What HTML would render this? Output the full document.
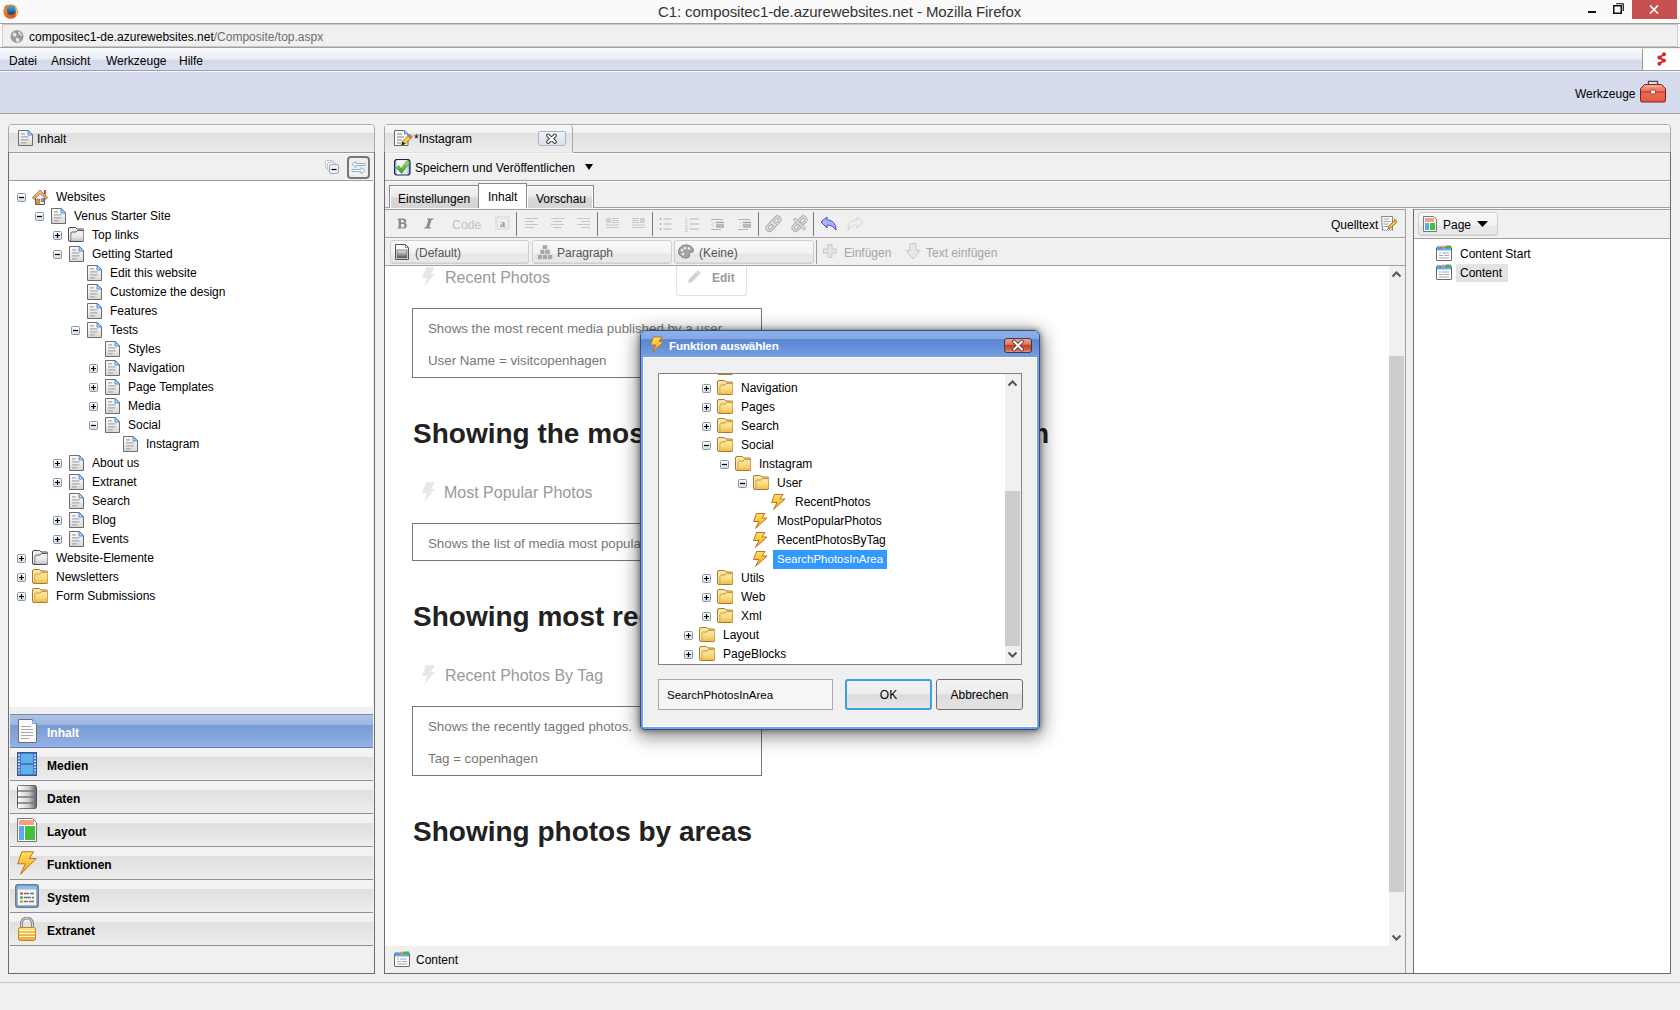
<!DOCTYPE html>
<html><head><meta charset="utf-8">
<style>
*{box-sizing:border-box;margin:0;padding:0}
html,body{width:1680px;height:1010px;overflow:hidden;background:#f0f0f0;font-family:"Liberation Sans",sans-serif;font-size:12px;color:#000}
.a{position:absolute}
.t{position:absolute;white-space:nowrap;line-height:19px;margin-top:1px}
</style></head><body>
<!-- TITLE BAR -->
<div class="a" style="left:0;top:0;width:1680px;height:23px;background:#fafafa"></div>
<div class="t" style="left:658px;top:1px;font-size:15px;line-height:19px;color:#333;letter-spacing:-0.1px">C1: compositec1-de.azurewebsites.net - Mozilla Firefox</div>
<div class="a" style="left:1632px;top:0;width:45px;height:19px;background:#c75050"></div>
<!-- ADDRESS BAR -->
<div class="a" style="left:0;top:23px;width:1680px;height:25px;background:#f0f0f0;border-top:1px solid #a0a0a0;border-bottom:1px solid #a0a0a0;box-shadow:inset 0 1px 0 #c8c8c8,inset 0 -1px 0 #c8c8c8"></div>
<div class="t" style="left:29px;top:27px;font-size:12px;line-height:19px;color:#000">compositec1-de.azurewebsites.net<span style="color:#6d6d6d">/Composite/top.aspx</span></div>
<!-- MENU BAR -->
<div class="a" style="left:0;top:48px;width:1643px;height:23px;background:linear-gradient(#f9fafd 0%,#e9edf7 52%,#d3d9ea 53%,#d8deee 100%);border-bottom:1px solid #a0a0a0"></div>
<div class="a" style="left:1642px;top:49px;width:38px;height:22px;background:#fdfdfd;border-left:1px solid #999;border-bottom:1px solid #a0a0a0"></div>
<div class="t" style="left:9px;top:51px">Datei</div>
<div class="t" style="left:51px;top:51px">Ansicht</div>
<div class="t" style="left:106px;top:51px">Werkzeuge</div>
<div class="t" style="left:179px;top:51px">Hilfe</div>
<!-- BLUE BAND -->
<div class="a" style="left:0;top:71px;width:1680px;height:43px;background:#d6dbee;border-bottom:1px solid #a0a0a0"></div>
<div class="a" style="left:0;top:71px;width:1680px;height:1px;background:#f6f7fb"></div><div class="t" style="left:1575px;top:84px">Werkzeuge</div>
<svg width="0" height="0" style="position:absolute">
<defs>
<linearGradient id="pmg" x1="0" y1="0" x2="0" y2="1"><stop offset="0" stop-color="#fff"/><stop offset="1" stop-color="#d3dbe3"/></linearGradient>
<linearGradient id="yfg" x1="0" y1="0" x2="0" y2="1"><stop offset="0" stop-color="#fdf0bd"/><stop offset="1" stop-color="#eec45a"/></linearGradient>
<linearGradient id="gfg" x1="0" y1="0" x2="0" y2="1"><stop offset="0" stop-color="#fafafa"/><stop offset="1" stop-color="#c9c9c9"/></linearGradient>
<linearGradient id="bolg" x1="0" y1="0" x2="0" y2="1"><stop offset="0" stop-color="#ffe25a"/><stop offset="1" stop-color="#f7a21b"/></linearGradient>
<linearGradient id="pgg" x1="0" y1="0" x2="0" y2="1"><stop offset="0" stop-color="#fafafa"/><stop offset=".45" stop-color="#f0f0f0"/><stop offset="1" stop-color="#d6d6d6"/></linearGradient>
<linearGradient id="yfb" x1="0" y1="0" x2="0" y2="1"><stop offset="0" stop-color="#fde9a8"/><stop offset="1" stop-color="#f2c860"/></linearGradient>
<linearGradient id="yff" x1="0" y1="0" x2="0" y2="1"><stop offset="0" stop-color="#fde79c"/><stop offset=".5" stop-color="#f8d77a"/><stop offset="1" stop-color="#efbd4c"/></linearGradient>
<linearGradient id="gfb" x1="0" y1="0" x2="0" y2="1"><stop offset="0" stop-color="#f4f4f4"/><stop offset="1" stop-color="#d8d8d8"/></linearGradient>
<linearGradient id="gff" x1="0" y1="0" x2="0" y2="1"><stop offset="0" stop-color="#f6f6f6"/><stop offset=".5" stop-color="#e6e6e6"/><stop offset="1" stop-color="#c4c4c4"/></linearGradient>
<linearGradient id="roofg" x1="0" y1="0" x2="0" y2="1"><stop offset="0" stop-color="#f0c898"/><stop offset="1" stop-color="#d89a5a"/></linearGradient>
<symbol id="plus" viewBox="0 0 9 9"><rect x=".5" y=".5" width="8" height="8" rx="1" fill="url(#pmg)" stroke="#8797a8"/><path d="M2 4.5h5M4.5 2v5" stroke="#000" stroke-width="1.2"/></symbol>
<symbol id="minus" viewBox="0 0 9 9"><rect x=".5" y=".5" width="8" height="8" rx="1" fill="url(#pmg)" stroke="#8797a8"/><path d="M2 4.5h5" stroke="#000" stroke-width="1.2"/></symbol>
<symbol id="page" viewBox="0 0 16 16"><path d="M1.5 .5h10l4 4v11h-14z" fill="url(#pgg)" stroke="#6c6c6c"/><path d="M11 .5l4.5 4.5h-4.5z" fill="#bcdcfb" stroke="#4f8fd6"/><path d="M4 3.8h4M4 6.8h7.5M4 9.8h7.5M4 12.8h5" stroke="#a9a9a9" stroke-width="1.3"/></symbol>
<symbol id="yfold" viewBox="0 0 16 16"><path d="M.5 2a1.5 1.5 0 0 1 1.5-1.5h5.5l1.5 1.5h5.5a1.5 1.5 0 0 1 1.5 1.5v9.5a1.5 1.5 0 0 1-1.5 1.5h-12.5a1.5 1.5 0 0 1-1.5-1.5z" fill="url(#yfb)" stroke="#a8782c"/><path d="M3 14.5v-8a1.5 1.5 0 0 1 1.5-1.5h3.5l1.5-1.5h6" fill="url(#yff)" stroke="#c89a48" stroke-width="1"/><path d="M3.5 6.5v7.5h11.5v-8.5h-5.5l-1.5 1.5h-4z" fill="url(#yff)"/><path d="M1.5 3.5v10" stroke="#fff8e0" stroke-dasharray="1 1"/></symbol>
<symbol id="gfold" viewBox="0 0 16 16"><path d="M.5 2a1.5 1.5 0 0 1 1.5-1.5h5.5l1.5 1.5h5.5a1.5 1.5 0 0 1 1.5 1.5v9.5a1.5 1.5 0 0 1-1.5 1.5h-12.5a1.5 1.5 0 0 1-1.5-1.5z" fill="url(#gfb)" stroke="#4a4a4a"/><path d="M3 14.5v-8a1.5 1.5 0 0 1 1.5-1.5h3.5l1.5-1.5h6" fill="none" stroke="#5a5a5a" stroke-width="1"/><path d="M3.5 6.5v7.5h11.5v-8.5h-5.5l-1.5 1.5h-4z" fill="url(#gff)"/><path d="M1.5 3.5v10" stroke="#fff" stroke-dasharray="1 1"/></symbol>
<symbol id="house" viewBox="0 0 16 16"><rect x="12" y="1" width="1.8" height="4.5" fill="#c8302a"/><path d="M3.5 8.5v7h9v-7" fill="#f0f0f0" stroke="#585858"/><path d="M.3 8.6L8 1l7.7 7.6-1.8 1.8L8 4.6 2.1 10.4z" fill="url(#roofg)" stroke="#9a6a3a" stroke-width=".8" stroke-linejoin="round"/><rect x="4.8" y="10.2" width="3" height="5.3" fill="#e8943a" stroke="#8a5a2a" stroke-width=".6"/><rect x="9.4" y="9.8" width="2.6" height="2.8" fill="#8aa6c0" stroke="#4a5a6a" stroke-width=".6"/></symbol>
<symbol id="bolt" viewBox="0 0 16 16"><path d="M3.5 .5H12L9 5H14L2.5 15.5L6 8.5H.5Z" fill="url(#bolg)" stroke="#c0702a" stroke-linejoin="round"/></symbol>
<symbol id="cph" viewBox="0 0 16 16"><rect x=".5" y="2.5" width="15" height="13" rx=".5" fill="#fff" stroke="#6a6a6a"/><path d="M1 3h14v2.5h-14z" fill="#62b0ec"/><path d="M1.5 3.5v-2h3l.5 2z" fill="#62b0ec" stroke="#3a7ab8" stroke-width=".5"/><path d="M5.5 .8h4.2v2.2h-4.2z" fill="#ec8a5a"/><path d="M10 .8h4.8v2.2h-4.8z" fill="#4cba4c" stroke="#2a8a2a" stroke-width=".4"/><path d="M3 8h2M6 8h7M3 10.5h4M8 10.5h5M3 13h10" stroke="#a4a4a4" stroke-width="1.2"/></symbol>
</defs></svg>


<svg class="a" style="left:2px;top:3px" width="17" height="17" viewBox="0 0 17 17"><defs><radialGradient id="ffo" cx=".35" cy=".35" r=".8"><stop offset="0" stop-color="#f29a2a"/><stop offset="1" stop-color="#d8441e"/></radialGradient><linearGradient id="ffb" x1="0" y1="0" x2="0" y2="1"><stop offset="0" stop-color="#3cb6e8"/><stop offset="1" stop-color="#123e88"/></linearGradient></defs><circle cx="8.6" cy="8.6" r="7.2" fill="url(#ffo)"/><circle cx="9.4" cy="7" r="4.6" fill="url(#ffb)"/><path d="M13.2 3.6c1.8 1.6 2.6 4 2.2 6.4-.4 1.6-1.2 2.6-2 3.2.8-1.6 1-3.4.4-5-.2-1.6-.4-3.2-.6-4.6z" fill="#f6d04a"/><path d="M5 10.6c1.4 1.4 4 1.8 6.2.6" stroke="#7a2a10" stroke-width="1" fill="none" opacity=".7"/><path d="M2 5c.6-1.8 2-3 3.4-3.6-.6 1.2-.4 2.4.4 3.2" fill="#e8742a"/></svg>
<svg class="a" style="left:10px;top:29px" width="15" height="15" viewBox="0 0 15 15"><circle cx="7" cy="7.5" r="6.5" fill="#9a9a9a"/><path d="M3 4c1.5-.5 3 0 3.5 1.5S5 8 4 7.5 2.5 5 3 4zM8 2.5c2 .5 3.5 2 4 4-1 .5-2 0-2.5-1S8 4 8 2.5zM6 9c1.5-.5 3 .5 3.5 2S8 13.5 7 13s-1.5-3-1-4z" fill="#e6e6e6"/></svg>
<div class="a" style="left:0;top:24px;width:3px;height:23px;background:#f8f8f8;border-right:1px solid #cfcfcf"></div>
<div class="a" style="left:1677px;top:24px;width:3px;height:23px;background:#f8f8f8;border-left:1px solid #cfcfcf"></div>
<div class="a" style="left:1588px;top:11px;width:8px;height:2px;background:#111"></div>
<svg class="a" style="left:1613px;top:3px" width="11" height="11" viewBox="0 0 11 11"><rect x=".75" y="2.75" width="7.5" height="7.5" fill="none" stroke="#111" stroke-width="1.5"/><path d="M3 .75h7.25v7.25" fill="none" stroke="#111" stroke-width="1.2"/></svg>
<svg class="a" style="left:1649px;top:5px" width="10" height="9" viewBox="0 0 10 9"><path d="M1 .5l8 8M9 .5l-8 8" stroke="#fff" stroke-width="1.6"/></svg>
<svg class="a" style="left:1657px;top:52px" width="10" height="14" viewBox="0 0 10 14"><g fill="#d42a2a"><circle cx="7" cy="2.3" r="2"/><circle cx="2.4" cy="5.6" r="2"/><circle cx="7" cy="8.6" r="2"/><circle cx="2.4" cy="11.7" r="2"/></g><path d="M7 2.3L2.4 5.6 7 8.6 2.4 11.7" stroke="#d42a2a" stroke-width="2" fill="none"/></svg>
<svg class="a" style="left:1640px;top:80px" width="26" height="23" viewBox="0 0 26 23"><path d="M8.5 5v-3.5h9v3.5" fill="none" stroke="#4a4a4a" stroke-width="1.4"/><path d="M9.6 5v-2.4h6.8v2.4" fill="none" stroke="#f4f4f4" stroke-width=".8"/><path d="M4.5 4.5h17l4 4.2v11.8a1.5 1.5 0 0 1-1.5 1.5h-22a1.5 1.5 0 0 1-1.5-1.5v-11.8z" fill="url(#tbg)" stroke="#7a2418"/><path d="M1 12h24" stroke="#a83a26" stroke-width="1"/><path d="M5 6h16" stroke="#fbb8a8" stroke-width="1"/><rect x="10.5" y="10" width="5" height="4" rx="1" fill="#f8eee8" stroke="#6a3a2a" stroke-width=".8"/></svg>
<svg width="0" height="0" style="position:absolute"><defs><linearGradient id="tbg" x1="0" y1="0" x2="0" y2="1"><stop offset="0" stop-color="#f7a08c"/><stop offset=".45" stop-color="#ee6a52"/><stop offset="1" stop-color="#e25a3e"/></linearGradient></defs></svg>

<!-- LEFT PANEL -->
<div class="a" style="left:8px;top:124px;width:367px;height:850px;border:1px solid #a9a9a9;border-radius:4px 4px 0 0;background:#f0f0f0"></div>
<div class="a" style="left:8px;top:152px;width:367px;height:822px;border:1px solid #6d6d6d;border-top:0"></div>
<div class="a" style="left:9px;top:125px;width:365px;height:27px;background:linear-gradient(#fdfdfd 0,#f4f4f4 5%,#f2f2f2 29%,#dfdfdf 30%,#e3e3e3 55%,#ebebeb 100%);border-radius:3px 3px 0 0"></div>
<div class="a" style="left:9px;top:152px;width:365px;height:1px;background:#9d9d9d"></div><div class="a" style="left:9px;top:153px;width:365px;height:1px;background:#fbfbfb"></div>
<svg class="a" style="left:17px;top:130px" width="16" height="16"><use href="#page"/></svg>
<div class="t" style="left:37px;top:129px">Inhalt</div>
<div class="a" style="left:9px;top:180px;width:364px;height:1px;background:#9d9d9d"></div>
<svg class="a" style="left:325px;top:160px" width="14" height="14" viewBox="0 0 14 14"><rect x=".5" y=".5" width="8" height="8" rx="1.5" fill="#f4f7fb" stroke="#b9c7d6"/><rect x="2.5" y="2.5" width="8" height="8" rx="1.5" fill="#f4f7fb" stroke="#b9c7d6"/><rect x="4.5" y="4.5" width="9" height="9" rx="1.5" fill="#eef2f6" stroke="#9aaabb"/><path d="M6.5 9.5h5" stroke="#000" stroke-width="1.2"/></svg>
<div class="a" style="left:347px;top:156px;width:23px;height:23px;border:2px solid #777;border-radius:4px;background:#efefef"></div>
<svg class="a" style="left:350px;top:159px" width="17" height="17" viewBox="0 0 17 17"><path d="M2 5.5l4-3v2h9v2h-9v2z" fill="#fff" stroke="#8fb0cc" stroke-linejoin="round"/><path d="M15 11.5l-4-3v2h-9v2h9v2z" fill="#fff" stroke="#8fb0cc" stroke-linejoin="round"/></svg>
<div class="a" style="left:9px;top:181px;width:364px;height:526px;background:#fff"></div>
<svg class="a" style="left:17px;top:193px" width="9" height="9"><use href="#minus"/></svg>
<svg class="a" style="left:32px;top:189px" width="16" height="16"><use href="#house"/></svg>
<div class="t" style="left:56px;top:187px">Websites</div>
<svg class="a" style="left:35px;top:212px" width="9" height="9"><use href="#minus"/></svg>
<svg class="a" style="left:50px;top:208px" width="16" height="16"><use href="#page"/></svg>
<div class="t" style="left:74px;top:206px">Venus Starter Site</div>
<svg class="a" style="left:53px;top:231px" width="9" height="9"><use href="#plus"/></svg>
<svg class="a" style="left:68px;top:227px" width="16" height="16"><use href="#gfold"/></svg>
<div class="t" style="left:92px;top:225px">Top links</div>
<svg class="a" style="left:53px;top:250px" width="9" height="9"><use href="#minus"/></svg>
<svg class="a" style="left:68px;top:246px" width="16" height="16"><use href="#page"/></svg>
<div class="t" style="left:92px;top:244px">Getting Started</div>
<svg class="a" style="left:86px;top:265px" width="16" height="16"><use href="#page"/></svg>
<div class="t" style="left:110px;top:263px">Edit this website</div>
<svg class="a" style="left:86px;top:284px" width="16" height="16"><use href="#page"/></svg>
<div class="t" style="left:110px;top:282px">Customize the design</div>
<svg class="a" style="left:86px;top:303px" width="16" height="16"><use href="#page"/></svg>
<div class="t" style="left:110px;top:301px">Features</div>
<svg class="a" style="left:71px;top:326px" width="9" height="9"><use href="#minus"/></svg>
<svg class="a" style="left:86px;top:322px" width="16" height="16"><use href="#page"/></svg>
<div class="t" style="left:110px;top:320px">Tests</div>
<svg class="a" style="left:104px;top:341px" width="16" height="16"><use href="#page"/></svg>
<div class="t" style="left:128px;top:339px">Styles</div>
<svg class="a" style="left:89px;top:364px" width="9" height="9"><use href="#plus"/></svg>
<svg class="a" style="left:104px;top:360px" width="16" height="16"><use href="#page"/></svg>
<div class="t" style="left:128px;top:358px">Navigation</div>
<svg class="a" style="left:89px;top:383px" width="9" height="9"><use href="#plus"/></svg>
<svg class="a" style="left:104px;top:379px" width="16" height="16"><use href="#page"/></svg>
<div class="t" style="left:128px;top:377px">Page Templates</div>
<svg class="a" style="left:89px;top:402px" width="9" height="9"><use href="#plus"/></svg>
<svg class="a" style="left:104px;top:398px" width="16" height="16"><use href="#page"/></svg>
<div class="t" style="left:128px;top:396px">Media</div>
<svg class="a" style="left:89px;top:421px" width="9" height="9"><use href="#minus"/></svg>
<svg class="a" style="left:104px;top:417px" width="16" height="16"><use href="#page"/></svg>
<div class="t" style="left:128px;top:415px">Social</div>
<svg class="a" style="left:122px;top:436px" width="16" height="16"><use href="#page"/></svg>
<div class="t" style="left:146px;top:434px">Instagram</div>
<svg class="a" style="left:53px;top:459px" width="9" height="9"><use href="#plus"/></svg>
<svg class="a" style="left:68px;top:455px" width="16" height="16"><use href="#page"/></svg>
<div class="t" style="left:92px;top:453px">About us</div>
<svg class="a" style="left:53px;top:478px" width="9" height="9"><use href="#plus"/></svg>
<svg class="a" style="left:68px;top:474px" width="16" height="16"><use href="#page"/></svg>
<div class="t" style="left:92px;top:472px">Extranet</div>
<svg class="a" style="left:68px;top:493px" width="16" height="16"><use href="#page"/></svg>
<div class="t" style="left:92px;top:491px">Search</div>
<svg class="a" style="left:53px;top:516px" width="9" height="9"><use href="#plus"/></svg>
<svg class="a" style="left:68px;top:512px" width="16" height="16"><use href="#page"/></svg>
<div class="t" style="left:92px;top:510px">Blog</div>
<svg class="a" style="left:53px;top:535px" width="9" height="9"><use href="#plus"/></svg>
<svg class="a" style="left:68px;top:531px" width="16" height="16"><use href="#page"/></svg>
<div class="t" style="left:92px;top:529px">Events</div>
<svg class="a" style="left:17px;top:554px" width="9" height="9"><use href="#plus"/></svg>
<svg class="a" style="left:32px;top:550px" width="16" height="16"><use href="#gfold"/></svg>
<div class="t" style="left:56px;top:548px">Website-Elemente</div>
<svg class="a" style="left:17px;top:573px" width="9" height="9"><use href="#plus"/></svg>
<svg class="a" style="left:32px;top:569px" width="16" height="16"><use href="#yfold"/></svg>
<div class="t" style="left:56px;top:567px">Newsletters</div>
<svg class="a" style="left:17px;top:592px" width="9" height="9"><use href="#plus"/></svg>
<svg class="a" style="left:32px;top:588px" width="16" height="16"><use href="#yfold"/></svg>
<div class="t" style="left:56px;top:586px">Form Submissions</div>

<svg width="0" height="0" style="position:absolute"><defs><linearGradient id="dg" x1="0" x2="1"><stop offset="0" stop-color="#fff"/><stop offset=".6" stop-color="#ccc"/><stop offset="1" stop-color="#666"/></linearGradient><linearGradient id="lockg" x1="0" y1="0" x2="0" y2="1"><stop offset="0" stop-color="#ffe48a"/><stop offset="1" stop-color="#f0b43a"/></linearGradient></defs></svg>
<div class="a" style="left:9px;top:707px;width:364px;height:266px;background:#f0f0f0"></div>
<div class="a" style="left:10px;top:714px;width:363px;height:34px;border-top:1px solid #7a8ba8;border-bottom:1px solid #5b7fc0;background:linear-gradient(#adc2e7 0,#9cb5e1 31%,#789cd4 32%,#83a4da 60%,#95b2e4 100%)"></div>
<svg class="a" style="left:17px;top:719px" width="20" height="24" viewBox="0 0 20 24"><path d="M1.5 .5h14l4 4v19h-18z" fill="#fafafa" stroke="#6f6f6f"/><path d="M15.5 .5l4 4h-4z" fill="#d6e6fa" stroke="#6f9fdc"/><path d="M4 7.5h10M4 10.5h12M4 13.5h12M4 16.5h12M4 19.5h8" stroke="#a8a8a8" stroke-width="1.2"/></svg>
<div class="t" style="left:47px;top:723px;font-size:12px;font-weight:bold;color:#fff">Inhalt</div>
<div class="a" style="left:10px;top:748px;width:363px;height:33px;border-bottom:1px solid #8f8f8f;background:linear-gradient(#f4f4f4 0,#f1f1f1 28%,#e0e0e0 29%,#e5e5e5 60%,#eeeeee 100%)"></div>
<svg class="a" style="left:17px;top:752px" width="20" height="24" viewBox="0 0 20 24"><rect x=".5" y=".5" width="19" height="23" fill="#4a78c4" stroke="#2f5a9e"/><rect x="4" y="2" width="12" height="9" rx="1" fill="#5fb1ec"/><rect x="4" y="13" width="12" height="9" rx="1" fill="#5fb1ec"/><path d="M2 2.5v19M18 2.5v19" stroke="#fff" stroke-width="1.4" stroke-dasharray="1.5 1.5"/></svg>
<div class="t" style="left:47px;top:756px;font-size:12px;font-weight:bold;color:#000">Medien</div>
<div class="a" style="left:10px;top:781px;width:363px;height:33px;border-bottom:1px solid #8f8f8f;background:linear-gradient(#f4f4f4 0,#f1f1f1 28%,#e0e0e0 29%,#e5e5e5 60%,#eeeeee 100%)"></div>
<svg class="a" style="left:17px;top:785px" width="20" height="24" viewBox="0 0 20 24"><rect x=".5" y=".5" width="19" height="23" rx="2" fill="#777" stroke="#555"/><path d="M1 3h18M1 9h18M1 15h18M1 21h18" stroke="url(#dg)" stroke-width="4.5"/></svg>
<div class="t" style="left:47px;top:789px;font-size:12px;font-weight:bold;color:#000">Daten</div>
<div class="a" style="left:10px;top:814px;width:363px;height:33px;border-bottom:1px solid #8f8f8f;background:linear-gradient(#f4f4f4 0,#f1f1f1 28%,#e0e0e0 29%,#e5e5e5 60%,#eeeeee 100%)"></div>
<svg class="a" style="left:17px;top:818px" width="20" height="24" viewBox="0 0 20 24"><path d="M.5 .5h15l4 4v19h-19z" fill="#fff" stroke="#777"/><rect x="2" y="2" width="15" height="5" fill="#f4a08a"/><rect x="2" y="8" width="5" height="14" fill="#5aaaf0"/><rect x="8" y="8" width="10" height="14" fill="#42c23a"/></svg>
<div class="t" style="left:47px;top:822px;font-size:12px;font-weight:bold;color:#000">Layout</div>
<div class="a" style="left:10px;top:847px;width:363px;height:33px;border-bottom:1px solid #8f8f8f;background:linear-gradient(#f4f4f4 0,#f1f1f1 28%,#e0e0e0 29%,#e5e5e5 60%,#eeeeee 100%)"></div>
<svg class="a" style="left:17px;top:851px" width="20" height="24" viewBox="0 0 20 24"><path d="M4.8 .75H16.5L12.4 7.5H19.3L3.5 23.25L8.3 12.75H.7Z" fill="url(#bolg)" stroke="#c0702a" stroke-linejoin="round"/></svg>
<div class="t" style="left:47px;top:855px;font-size:12px;font-weight:bold;color:#000">Funktionen</div>
<div class="a" style="left:10px;top:880px;width:363px;height:33px;border-bottom:1px solid #8f8f8f;background:linear-gradient(#f4f4f4 0,#f1f1f1 28%,#e0e0e0 29%,#e5e5e5 60%,#eeeeee 100%)"></div>
<svg class="a" style="left:15px;top:884px" width="24" height="24" viewBox="0 0 24 24"><rect x=".75" y=".75" width="22.5" height="22.5" rx="2.5" fill="#9db3c8" stroke="#647d96" stroke-width="1.5"/><rect x="2.5" y="2" width="19" height="3" fill="#84c0f0"/><rect x="3" y="5.5" width="18" height="15.5" fill="#f6f6f6"/><circle cx="6.5" cy="9.5" r="1.6" fill="#e0604a"/><circle cx="6.5" cy="13.5" r="1.6" fill="#44b24a"/><circle cx="6.5" cy="17.5" r="1.6" fill="#e09a3a"/><path d="M9 9.5h5M15 9.5h4M9 13.5h7M17 13.5h2M9 17.5h4M14 17.5h5" stroke="#707070" stroke-width="1.4"/></svg>
<div class="t" style="left:47px;top:888px;font-size:12px;font-weight:bold;color:#000">System</div>
<div class="a" style="left:10px;top:913px;width:363px;height:33px;border-bottom:1px solid #8f8f8f;background:linear-gradient(#f4f4f4 0,#f1f1f1 28%,#e0e0e0 29%,#e5e5e5 60%,#eeeeee 100%)"></div>
<svg class="a" style="left:17px;top:917px" width="20" height="24" viewBox="0 0 20 24"><path d="M4.5 11v-4.5a5.5 5.5 0 0 1 11 0v4.5" fill="none" stroke="#8a8a8a" stroke-width="3"/><path d="M4.5 11v-4.5a5.5 5.5 0 0 1 11 0v4.5" fill="none" stroke="#d8d8d8" stroke-width="1"/><rect x="1.5" y="10.5" width="17" height="13" rx="2" fill="url(#lockg)" stroke="#c0861a"/><path d="M2 13.5h16M2 16.5h16M2 19.5h16" stroke="#fff6c8" stroke-width="1.2"/><path d="M2 15h16M2 18h16M2 21h16" stroke="#e0a030" stroke-width=".8"/></svg>
<div class="t" style="left:47px;top:921px;font-size:12px;font-weight:bold;color:#000">Extranet</div>
<svg width="0" height="0" style="position:absolute"><defs><linearGradient id="chkg" x1="0" y1="0" x2="0" y2="1"><stop offset="0" stop-color="#fff"/><stop offset="1" stop-color="#cfd8e6"/></linearGradient><linearGradient id="grg" x1="0" y1="0" x2="0" y2="1"><stop offset="0" stop-color="#eee"/><stop offset="1" stop-color="#555"/></linearGradient><symbol id="gbolt" viewBox="0 0 15 20"><path d="M5 0h9l-4 7h4l-11 13 3-9h-5z" fill="#e8e8e8"/></symbol></defs></svg>
<div class="a" style="left:0;top:982px;width:1680px;height:1px;background:#c4c4c4"></div>
<!-- EDITOR PANEL -->
<div class="a" style="left:384px;top:124px;width:1287px;height:850px;border:1px solid #a9a9a9;border-radius:4px 4px 0 0;background:#f0f0f0"></div>
<div class="a" style="left:384px;top:152px;width:1287px;height:822px;border:1px solid #6d6d6d;border-top:0"></div>
<div class="a" style="left:385px;top:125px;width:1285px;height:27px;background:linear-gradient(#fdfdfd 0,#f4f4f4 5%,#f2f2f2 29%,#dfdfdf 30%,#e3e3e3 55%,#ebebeb 100%);border-radius:3px 3px 0 0"></div>
<div class="a" style="left:385px;top:125px;width:188px;height:28px;border-right:1px solid #a9a9a9;border-radius:0 4px 0 0;background:linear-gradient(#fdfdfd 0,#f5f5f5 5%,#f3f3f3 29%,#e2e2e2 30%,#e6e6e6 55%,#eeeeee 100%)"></div>
<div class="a" style="left:573px;top:152px;width:1097px;height:1px;background:#9d9d9d"></div><div class="a" style="left:385px;top:153px;width:1285px;height:1px;background:#fbfbfb"></div>
<div class="a" style="left:385px;top:152px;width:188px;height:1px;background:#e0e0e0"></div>
<svg class="a" style="left:394px;top:130px" width="19" height="17" viewBox="0 0 19 17"><path d="M.5 .5h10l3.5 3.5v11.5h-13.5z" fill="#fafafa" stroke="#6a6a6a"/><path d="M10.5 .5l3.5 3.5h-3.5z" fill="#bcdcfb" stroke="#4f8fd6"/><path d="M3 4h5M3 7h7M3 10h5M3 13h4" stroke="#a8a8a8" stroke-width="1.3"/><path d="M7.5 15L8.5 11.2 14 5.7 16.8 8.5 11.3 14z" fill="#f5c842" stroke="#7a5a1a" stroke-width=".6"/><path d="M14 5.7L15.6 4.1 18.4 6.9 16.8 8.5z" fill="#e07a7a" stroke="#8a3a3a" stroke-width=".5"/><path d="M7.5 15L8.5 11.2 11.3 14z" fill="#1a1a1a"/></svg>
<div class="t" style="left:414px;top:129px">*Instagram</div>
<div class="a" style="left:538px;top:131px;width:28px;height:15px;border:1px solid #a9b6c8;border-radius:2px;background:linear-gradient(#eef1f5,#dde3ea)"></div>
<svg class="a" style="left:545px;top:132px" width="13" height="13" viewBox="0 0 13 13"><path d="M3 3.5l7 6.5M10 3.5l-7 6.5" stroke="#3a3a3a" stroke-width="3.8" stroke-linecap="round"/><path d="M3 3.5l7 6.5M10 3.5l-7 6.5" stroke="#fff" stroke-width="1.8" stroke-linecap="round"/></svg>
<!-- save row -->
<div class="a" style="left:385px;top:180px;width:1285px;height:1px;background:#a0a0a0"></div>
<div class="a" style="left:385px;top:181px;width:1285px;height:1px;background:#fafafa"></div>
<svg class="a" style="left:394px;top:159px" width="17" height="17" viewBox="0 0 17 17"><defs><linearGradient id="ckg2" x1="0" y1="0" x2="0" y2="1"><stop offset="0" stop-color="#a6e06a"/><stop offset="1" stop-color="#3a9a22"/></linearGradient><linearGradient id="svb" x1="0" y1="0" x2="1" y2="0"><stop offset="0" stop-color="#6a8ad0"/><stop offset=".2" stop-color="#fff"/><stop offset=".8" stop-color="#e4e4e4"/><stop offset="1" stop-color="#6a8ad0"/></linearGradient></defs><rect x=".5" y=".5" width="15.5" height="15.5" rx="2.5" fill="url(#svb)" stroke="#14245c" stroke-width="1.2"/><path d="M1.8 8.8L4.8 6.4 7.2 9.6 13.2 1.6 15.8 3.8 7.6 14.6z" fill="url(#ckg2)" stroke="#3c8a20" stroke-width=".5"/></svg>
<div class="t" style="left:415px;top:158px;font-size:12px">Speichern und Veröffentlichen</div>
<svg class="a" style="left:585px;top:164px" width="8" height="6" viewBox="0 0 8 6"><path d="M0 0h8l-4 6z" fill="#000"/></svg>
<!-- tabs row -->
<div class="a" style="left:385px;top:207px;width:1285px;height:1px;background:#a0a0a0"></div>
<div class="a" style="left:385px;top:208px;width:1285px;height:1px;background:#f8f8f8"></div>
<div class="a" style="left:385px;top:209px;width:1285px;height:1px;background:#a0a0a0"></div>
<div class="a" style="left:389px;top:185px;width:90px;height:23px;border:1px solid #8a8a8a;border-bottom:0;background:linear-gradient(#f4f4f4 0,#ececec 45%,#d9d9d9 55%,#d4d4d4 100%);box-shadow:inset 1px 1px 0 #fff"></div>
<div class="t" style="left:398px;top:189px">Einstellungen</div>
<div class="a" style="left:478px;top:183px;width:49px;height:25px;border:1px solid #8a8a8a;border-bottom:0;background:#fff"></div>
<div class="t" style="left:488px;top:187px">Inhalt</div>
<div class="a" style="left:526px;top:185px;width:68px;height:23px;border:1px solid #8a8a8a;border-bottom:0;background:linear-gradient(#f4f4f4 0,#ececec 45%,#d9d9d9 55%,#d4d4d4 100%);box-shadow:inset 1px 1px 0 #fff,inset -1px 0 0 #fff"></div>
<div class="t" style="left:536px;top:189px">Vorschau</div>
<!-- toolbar row -->

<div class="a" style="left:385px;top:237px;width:1021px;height:1px;background:#a0a0a0"></div>
<div class="a" style="left:385px;top:238px;width:1021px;height:1px;background:#fafafa"></div>
<div class="a" style="left:516px;top:212px;width:1px;height:24px;background:#777"></div>
<div class="a" style="left:597px;top:212px;width:1px;height:24px;background:#777"></div>
<div class="a" style="left:652px;top:212px;width:1px;height:24px;background:#777"></div>
<div class="a" style="left:758px;top:212px;width:1px;height:24px;background:#777"></div>
<div class="a" style="left:813px;top:212px;width:1px;height:24px;background:#777"></div>
<svg class="a" style="left:397px;top:218px" width="11" height="11" viewBox="0 0 11 11"><path d="M.5 .5h5.5c2.2 0 3.3 1 3.3 2.5 0 1.1-.7 1.8-1.8 2.1 1.5.3 2.3 1.1 2.3 2.4 0 1.7-1.3 3-3.6 3h-5.7v-1.2h1.1v-7.6h-1.1z" fill="#8a8a8a"/><path d="M4 2v2.6h1.5c.9 0 1.4-.5 1.4-1.3s-.5-1.3-1.4-1.3zM4 6v3.4h1.8c1 0 1.6-.6 1.6-1.7s-.6-1.7-1.6-1.7z" fill="#f0f0f0"/></svg>
<svg class="a" style="left:424px;top:218px" width="10" height="11" viewBox="0 0 10 11"><path d="M3.2 .5h6.3l-.3 1.2h-1.6l-2.4 7.6h1.6l-.3 1.2h-6.2l.3-1.2h1.5l2.4-7.6h-1.5z" fill="#8a8a8a"/></svg>
<div class="t" style="left:452px;top:215px;font-size:12.3px;color:#c2c2c2">Code</div>
<svg class="a" style="left:495px;top:216px" width="15" height="14" viewBox="0 0 15 14"><defs><pattern id="hatch" width="2.5" height="2.5" patternUnits="userSpaceOnUse" patternTransform="rotate(45)"><rect width="1.1" height="2.5" fill="#d2d2d2"/></pattern></defs><rect x="0" y="0" width="15" height="14" fill="url(#hatch)"/><rect x="3" y="2.5" width="9" height="9" fill="#f0f0f0"/><text x="7.5" y="10.5" text-anchor="middle" font-family="Liberation Serif" font-weight="bold" font-size="11" fill="#9a9a9a">a</text></svg>
<svg class="a" style="left:524px;top:217px" width="80" height="13" viewBox="0 0 80 13"><g stroke="#c6c6c6" stroke-width="1.2"><path d="M1 1.5h13M1 4.5h9M1 7.5h13M1 10.5h9"/><path d="M27 1.5h13M29 4.5h9M27 7.5h13M29 10.5h9"/><path d="M53 1.5h13M57 4.5h9M53 7.5h13M57 10.5h9"/></g></svg>
<svg class="a" style="left:605px;top:217px" width="42" height="13" viewBox="0 0 42 13"><g fill="#cfcfcf"><rect x="1" y="1" width="5" height="5"/><rect x="35" y="1" width="5" height="5"/></g><g stroke="#c6c6c6" stroke-width="1.2"><path d="M7 1.5h7M7 3.5h7M7 5.5h7M1 8h13M1 10.5h13"/><path d="M27 1.5h7M27 3.5h7M27 5.5h7M27 8h13M27 10.5h13"/></g></svg>
<svg class="a" style="left:658px;top:216px" width="95" height="16" viewBox="0 0 95 16"><g fill="#b4b4b4"><circle cx="2.5" cy="3" r="1.1"/><circle cx="2.5" cy="8" r="1.1"/><circle cx="2.5" cy="13" r="1.1"/></g><g stroke="#b4b4b4" stroke-width="1.1"><path d="M5.5 3h8M5.5 8h8M5.5 13h8"/><path d="M32 3h9M32 8h9M32 13h9"/><path d="M53 3.5h12M53 13.5h10M80 3.5h12M80 13.5h10"/></g><g stroke="#a6a6a6" stroke-width="1.3"><path d="M58 6.5h8M58 9h8M58 11h8"/><path d="M85 6.5h8M85 9h8M85 11h8"/></g><path d="M56.5 6l-2.5 2.5 2.5 2.5M82 6l2.5 2.5-2.5 2.5" fill="none" stroke="#d0d0d0" stroke-width="1"/><text x="26.5" y="5.5" font-size="6" fill="#bdbdbd" font-family="Liberation Sans">1</text><text x="26.5" y="10.5" font-size="6" fill="#bdbdbd" font-family="Liberation Sans">2</text><text x="26.5" y="15.5" font-size="6" fill="#bdbdbd" font-family="Liberation Sans">3</text></svg>
<svg class="a" style="left:765px;top:215px" width="44" height="18" viewBox="0 0 44 18"><g fill="none" stroke="#a4a4a4" stroke-width="3"><rect x="1.5" y="9" width="9" height="5" rx="2.5" transform="rotate(-45 6 11.5)"/><rect x="6.5" y="3.5" width="9" height="5" rx="2.5" transform="rotate(-45 11 6)"/><rect x="27.5" y="9" width="9" height="5" rx="2.5" transform="rotate(-45 32 11.5)"/><rect x="32.5" y="3.5" width="9" height="5" rx="2.5" transform="rotate(-45 37 6)"/></g><g fill="none" stroke="#e8e8e8" stroke-width="1.2"><rect x="1.5" y="9" width="9" height="5" rx="2.5" transform="rotate(-45 6 11.5)"/><rect x="6.5" y="3.5" width="9" height="5" rx="2.5" transform="rotate(-45 11 6)"/><rect x="27.5" y="9" width="9" height="5" rx="2.5" transform="rotate(-45 32 11.5)"/><rect x="32.5" y="3.5" width="9" height="5" rx="2.5" transform="rotate(-45 37 6)"/></g><path d="M30 4.5l9 9" stroke="#b8b8b8" stroke-width="3.4" stroke-linecap="round"/><path d="M30 4.5l9 9" stroke="#dedede" stroke-width="1.4" stroke-linecap="round"/></svg>
<svg class="a" style="left:820px;top:216px" width="44" height="16" viewBox="0 0 44 16"><path d="M1 6l6-5v3c5 0 9 3 9 10c-2-3-5-5-9-5v3z" fill="#a9b2f6" stroke="#444cc0" stroke-width="1" stroke-linejoin="round"/><path d="M43 6l-6-5v3c-5 0-9 3-9 10c2-3 5-5 9-5v3z" fill="#f0f0f0" stroke="#d4d4d4" stroke-width="1" stroke-linejoin="round"/></svg>
<div class="t" style="left:1331px;top:215px">Quelltext</div>
<svg class="a" style="left:1381px;top:216px" width="17" height="16" viewBox="0 0 17 16"><path d="M.5 .5h11v14l-1-1-1 1-1-1-1 1-1-1-1 1-1-1-1 1-1-1-1 1z" fill="#f8f8f8" stroke="#888"/><path d="M2.5 3h6M2.5 5.5h7M2.5 8h5M2.5 10.5h6" stroke="#aaa"/><path d="M7 13l1-3 6-6 2 2-6 6z" fill="#f7c340" stroke="#9a5a1a" stroke-width=".8"/><path d="M13 3l2 2" stroke="#e07070" stroke-width="1.6"/></svg>
<!-- format row -->
<div class="a" style="left:385px;top:265px;width:1021px;height:1px;background:#a0a0a0"></div>
<div class="a" style="left:390px;top:240px;width:139px;height:24px;border:1px solid #cfcfcf;border-radius:3px;background:linear-gradient(#f9f9f9 0,#f2f2f2 55%,#e6e6e6 60%,#eaeaea 100%);box-shadow:inset 0 -1px 0 #d9d9d9"></div>
<svg class="a" style="left:395px;top:244px" width="15" height="16" viewBox="0 0 15 16"><path d="M.5 .5h10l3 3v12h-13z" fill="#fff" stroke="#555"/><path d="M10.5 .5v3h3" fill="none" stroke="#888"/><rect x="2" y="6" width="10" height="8" fill="url(#grg)" stroke="#666" stroke-width=".8"/></svg>
<div class="t" style="left:415px;top:243px;color:#555">(Default)</div>
<div class="a" style="left:532px;top:240px;width:140px;height:24px;border:1px solid #cfcfcf;border-radius:3px;background:linear-gradient(#f9f9f9 0,#f2f2f2 55%,#e6e6e6 60%,#eaeaea 100%);box-shadow:inset 0 -1px 0 #d9d9d9"></div>
<svg class="a" style="left:537px;top:244px" width="16" height="16" viewBox="0 0 16 16"><g fill="#a8a8a8" stroke="#e4e4e4" stroke-width=".7"><rect x="5.5" y="1" width="5" height="4.5"/><rect x="3" y="5.5" width="5" height="5"/><rect x="8" y="5.5" width="5" height="5"/><rect x="0.5" y="10.5" width="5" height="5"/><rect x="5.5" y="10.5" width="5" height="5"/><rect x="10.5" y="10.5" width="5" height="5"/></g></svg>
<div class="t" style="left:557px;top:243px;color:#555">Paragraph</div>
<div class="a" style="left:674px;top:240px;width:140px;height:24px;border:1px solid #cfcfcf;border-radius:3px;background:linear-gradient(#f9f9f9 0,#f2f2f2 55%,#e6e6e6 60%,#eaeaea 100%);box-shadow:inset 0 -1px 0 #d9d9d9"></div>
<svg class="a" style="left:678px;top:244px" width="16" height="15" viewBox="0 0 16 15"><path d="M8 1c4 0 7.5 2.5 7.5 5.5 0 2-2 2-3 2s-1.5 1-1 2c.5 1.5-.5 3.5-3.5 3.5C4 14 .5 11 .5 7.5S4 1 8 1z" fill="#a4a4a4" stroke="#7c7c7c"/><g fill="#eee"><circle cx="4" cy="6" r="1.3"/><circle cx="7" cy="4" r="1.3"/><circle cx="11" cy="4.5" r="1.3"/><circle cx="5" cy="10" r="1.3"/></g></svg>
<div class="t" style="left:699px;top:243px;color:#555">(Keine)</div>
<div class="a" style="left:816px;top:240px;width:1px;height:24px;background:#999"></div>
<svg class="a" style="left:823px;top:244px" width="14" height="14" viewBox="0 0 14 14"><path d="M5 .5h4v4.5h4.5v4h-4.5v4.5h-4v-4.5h-4.5v-4h4.5z" fill="#e4e4e4" stroke="#c8c8c8"/></svg>
<div class="t" style="left:844px;top:243px;color:#a5a5a5">Einfügen</div>
<svg class="a" style="left:905px;top:243px" width="16" height="17" viewBox="0 0 16 17"><path d="M5 .5h6v7h4l-7 8.5-7-8.5h4z" fill="#e8e8e8" stroke="#c8c8c8" stroke-linejoin="round"/></svg>
<div class="t" style="left:926px;top:243px;color:#a5a5a5">Text einfügen</div>
<!-- content area -->
<div class="a" style="left:385px;top:266px;width:1004px;height:680px;background:#fff"></div>
<div class="a" style="left:1389px;top:266px;width:16px;height:680px;background:#f0f0f0"></div>
<div class="a" style="left:1389px;top:356px;width:15px;height:536px;background:#cdcdcd"></div>
<svg class="a" style="left:1391px;top:270px" width="11" height="8" viewBox="0 0 11 8"><path d="M1.5 6.5l4-4 4 4" fill="none" stroke="#555" stroke-width="2"/></svg>
<svg class="a" style="left:1391px;top:934px" width="11" height="8" viewBox="0 0 11 8"><path d="M1.5 1.5l4 4 4-4" fill="none" stroke="#555" stroke-width="2"/></svg>
<div class="a" style="left:1405px;top:209px;width:1px;height:764px;background:#a0a0a0"></div>
<div class="a" style="left:1406px;top:209px;width:7px;height:764px;background:#f0f0f0"></div>
<div class="a" style="left:1413px;top:209px;width:1px;height:764px;background:#6d6d6d"></div>
<!-- content bottom bar -->
<svg class="a" style="left:394px;top:951px" width="16" height="16"><use href="#cph"/></svg>
<div class="t" style="left:416px;top:950px">Content</div>
<!-- right panel -->
<div class="a" style="left:1414px;top:238px;width:256px;height:735px;background:#fff;border-top:1px solid #a0a0a0"></div>
<div class="a" style="left:1418px;top:212px;width:80px;height:24px;border:1px solid #cfcfcf;border-radius:3px;background:linear-gradient(#f9f9f9 0,#f2f2f2 55%,#e6e6e6 60%,#eaeaea 100%);box-shadow:inset 0 -1px 0 #d9d9d9"></div>
<svg class="a" style="left:1423px;top:216px" width="15" height="16" viewBox="0 0 15 16"><path d="M.5 .5h10l3 3v12h-13z" fill="#fff" stroke="#777"/><rect x="2" y="2" width="9" height="4" fill="#f4a08a"/><rect x="2" y="7" width="4" height="7" fill="#5aaaf0"/><rect x="7" y="7" width="5" height="7" fill="#42c23a"/></svg>
<div class="t" style="left:1443px;top:215px">Page</div>
<svg class="a" style="left:1477px;top:221px" width="11" height="6" viewBox="0 0 11 6"><path d="M0 0h11l-5.5 6z" fill="#000"/></svg>
<svg class="a" style="left:1436px;top:245px" width="16" height="16"><use href="#cph"/></svg>
<div class="t" style="left:1460px;top:244px">Content Start</div>
<div class="a" style="left:1456px;top:264px;width:52px;height:18px;background:#e3e3e3"></div>
<svg class="a" style="left:1436px;top:264px" width="16" height="16"><use href="#cph"/></svg>
<div class="t" style="left:1460px;top:263px">Content</div>
<!-- EDITOR CONTENT -->
<svg class="a" style="left:421px;top:267px" width="15" height="20"><use href="#gbolt"/></svg>
<div class="t" style="left:445px;top:267px;font-size:16px;line-height:20px;color:#999">Recent Photos</div>
<div class="a" style="left:676px;top:266px;width:71px;height:30px;border:1px solid #e2e2e2;border-top:0;border-radius:0 0 3px 3px;background:#fff"></div>
<svg class="a" style="left:687px;top:270px" width="14" height="14" viewBox="0 0 14 14"><path d="M1 13l1-4 7-7 3 3-7 7z" fill="#d0d0d0"/><path d="M10 1l3 3" stroke="#d0d0d0" stroke-width="2"/></svg>
<div class="t" style="left:712px;top:268px;font-size:12px;font-weight:bold;color:#999">Edit</div>
<div class="a" style="left:412px;top:308px;width:350px;height:70px;border:1px solid #767676"></div>
<div class="t" style="left:428px;top:318px;font-size:13.3px;color:#777">Shows the most recent media published by a user</div>
<div class="t" style="left:428px;top:350px;font-size:13.3px;color:#777">User Name = visitcopenhagen</div>
<div class="t" style="left:413px;top:418px;font-size:28px;line-height:30px;font-weight:bold;color:#222">Showing the most popular photos on Instagram</div>
<svg class="a" style="left:421px;top:482px" width="15" height="20"><use href="#gbolt"/></svg>
<div class="t" style="left:444px;top:482px;font-size:16px;line-height:20px;color:#999">Most Popular Photos</div>
<div class="a" style="left:412px;top:523px;width:350px;height:38px;border:1px solid #767676"></div>
<div class="t" style="left:428px;top:533px;font-size:13.3px;color:#777">Shows the list of media most popular at the moment.</div>
<div class="t" style="left:413px;top:601px;font-size:28px;line-height:30px;font-weight:bold;color:#222">Showing most recent photos by tag</div>
<svg class="a" style="left:421px;top:665px" width="15" height="20"><use href="#gbolt"/></svg>
<div class="t" style="left:445px;top:665px;font-size:16px;line-height:20px;color:#999">Recent Photos By Tag</div>
<div class="a" style="left:412px;top:706px;width:350px;height:70px;border:1px solid #767676"></div>
<div class="t" style="left:428px;top:716px;font-size:13.3px;color:#777">Shows the recently tagged photos.</div>
<div class="t" style="left:428px;top:748px;font-size:13.3px;color:#777">Tag = copenhagen</div>
<div class="t" style="left:413px;top:816px;font-size:28px;line-height:30px;font-weight:bold;color:#222">Showing photos by areas</div>


<!-- DIALOG -->
<div class="a" style="left:640px;top:330px;width:400px;height:400px;border-radius:6px 6px 4px 4px;box-shadow:0 0 5px 1px rgba(0,0,0,.35),0 4px 18px 3px rgba(0,0,0,.45)"></div>
<div class="a" style="left:640px;top:330px;width:400px;height:400px;border:1px solid #2f4f8f;border-radius:6px 6px 4px 4px;background:#78a0e0"></div>
<div class="a" style="left:641px;top:331px;width:398px;height:27px;border-radius:5px 5px 0 0;background:linear-gradient(#8db0ea 0,#86a9e4 28%,#5a86d2 32%,#6590d8 60%,#7aa1e0 100%)"></div>
<div class="a" style="left:643px;top:357px;width:394px;height:370px;background:#fff"></div>
<div class="a" style="left:644px;top:358px;width:392px;height:368px;background:#f0f0f0"></div>
<svg class="a" style="left:650px;top:336px" width="16" height="17"><use href="#bolt"/></svg>
<div class="t" style="left:669px;top:335px;font-size:11.7px;font-weight:bold;color:#fff;letter-spacing:-0.15px">Funktion auswählen</div>
<div class="a" style="left:1004px;top:338px;width:28px;height:15px;border:1px solid #3a3a5a;border-radius:3px;background:linear-gradient(#f0a090 0,#e07a66 40%,#c0442a 50%,#d0603f 80%,#e89080 100%)"></div>
<svg class="a" style="left:1011px;top:339px" width="14" height="13" viewBox="0 0 14 13"><path d="M3 2.5l8 8M11 2.5l-8 8" stroke="#4a2a2a" stroke-width="3.6" stroke-linecap="round"/><path d="M3 2.5l8 8M11 2.5l-8 8" stroke="#fff" stroke-width="2" stroke-linecap="round"/></svg>
<div class="a" style="left:658px;top:373px;width:364px;height:292px;border:1px solid #828282;background:#fff;overflow:hidden">
<div style="position:absolute;left:0;top:0;width:362px;height:290px">
<svg class="a" style="left:58px;top:-14px" width="16" height="16"><use href="#yfold"/></svg>
<svg class="a" style="left:43px;top:10px" width="9" height="9"><use href="#plus"/></svg>
<svg class="a" style="left:58px;top:6px" width="16" height="16"><use href="#yfold"/></svg>
<div class="t" style="left:82px;top:4px">Navigation</div>
<svg class="a" style="left:43px;top:29px" width="9" height="9"><use href="#plus"/></svg>
<svg class="a" style="left:58px;top:25px" width="16" height="16"><use href="#yfold"/></svg>
<div class="t" style="left:82px;top:23px">Pages</div>
<svg class="a" style="left:43px;top:48px" width="9" height="9"><use href="#plus"/></svg>
<svg class="a" style="left:58px;top:44px" width="16" height="16"><use href="#yfold"/></svg>
<div class="t" style="left:82px;top:42px">Search</div>
<svg class="a" style="left:43px;top:67px" width="9" height="9"><use href="#minus"/></svg>
<svg class="a" style="left:58px;top:63px" width="16" height="16"><use href="#yfold"/></svg>
<div class="t" style="left:82px;top:61px">Social</div>
<svg class="a" style="left:61px;top:86px" width="9" height="9"><use href="#minus"/></svg>
<svg class="a" style="left:76px;top:82px" width="16" height="16"><use href="#yfold"/></svg>
<div class="t" style="left:100px;top:80px">Instagram</div>
<svg class="a" style="left:79px;top:105px" width="9" height="9"><use href="#minus"/></svg>
<svg class="a" style="left:94px;top:101px" width="16" height="16"><use href="#yfold"/></svg>
<div class="t" style="left:118px;top:99px">User</div>
<svg class="a" style="left:112px;top:120px" width="16" height="16"><use href="#bolt"/></svg>
<div class="t" style="left:136px;top:118px">RecentPhotos</div>
<svg class="a" style="left:94px;top:139px" width="16" height="16"><use href="#bolt"/></svg>
<div class="t" style="left:118px;top:137px">MostPopularPhotos</div>
<svg class="a" style="left:94px;top:158px" width="16" height="16"><use href="#bolt"/></svg>
<div class="t" style="left:118px;top:156px">RecentPhotosByTag</div>
<svg class="a" style="left:94px;top:177px" width="16" height="16"><use href="#bolt"/></svg>
<div class="a" style="left:114px;top:176px;width:114px;height:19px;background:#3399ff"></div>
<div class="t" style="left:118px;top:175px;color:#fff;font-size:11.5px">SearchPhotosInArea</div>
<svg class="a" style="left:43px;top:200px" width="9" height="9"><use href="#plus"/></svg>
<svg class="a" style="left:58px;top:196px" width="16" height="16"><use href="#yfold"/></svg>
<div class="t" style="left:82px;top:194px">Utils</div>
<svg class="a" style="left:43px;top:219px" width="9" height="9"><use href="#plus"/></svg>
<svg class="a" style="left:58px;top:215px" width="16" height="16"><use href="#yfold"/></svg>
<div class="t" style="left:82px;top:213px">Web</div>
<svg class="a" style="left:43px;top:238px" width="9" height="9"><use href="#plus"/></svg>
<svg class="a" style="left:58px;top:234px" width="16" height="16"><use href="#yfold"/></svg>
<div class="t" style="left:82px;top:232px">Xml</div>
<svg class="a" style="left:25px;top:257px" width="9" height="9"><use href="#plus"/></svg>
<svg class="a" style="left:40px;top:253px" width="16" height="16"><use href="#yfold"/></svg>
<div class="t" style="left:64px;top:251px">Layout</div>
<svg class="a" style="left:25px;top:276px" width="9" height="9"><use href="#plus"/></svg>
<svg class="a" style="left:40px;top:272px" width="16" height="16"><use href="#yfold"/></svg>
<div class="t" style="left:64px;top:270px">PageBlocks</div>
</div>
<div class="a" style="left:346px;top:0;width:16px;height:290px;background:#f0f0f0"></div>
<div class="a" style="left:346px;top:117px;width:15px;height:155px;background:#cdcdcd"></div>
<svg class="a" style="left:348px;top:5px" width="11" height="8" viewBox="0 0 11 8"><path d="M1.5 6.5l4-4 4 4" fill="none" stroke="#555" stroke-width="2"/></svg>
<svg class="a" style="left:348px;top:277px" width="11" height="8" viewBox="0 0 11 8"><path d="M1.5 1.5l4 4 4-4" fill="none" stroke="#555" stroke-width="2"/></svg>
</div>
<div class="a" style="left:658px;top:679px;width:175px;height:31px;border:1px solid #a9a9a9;background:#f6f6f6"></div>
<div class="t" style="left:667px;top:685px;font-size:11.5px">SearchPhotosInArea</div>
<div class="a" style="left:845px;top:679px;width:87px;height:31px;border:2px solid #3aa2e4;border-radius:3px;background:linear-gradient(#f3f3f3 0,#ededed 45%,#dddddd 52%,#e4e4e4 100%)"></div>
<div class="t" style="left:845px;top:685px;width:87px;text-align:center">OK</div>
<div class="a" style="left:936px;top:679px;width:87px;height:31px;border:1px solid #707070;border-radius:3px;background:linear-gradient(#f3f3f3 0,#ededed 45%,#dddddd 52%,#e4e4e4 100%)"></div>
<div class="t" style="left:936px;top:685px;width:87px;text-align:center">Abbrechen</div>

<!-- MAIN -->
</body></html>
